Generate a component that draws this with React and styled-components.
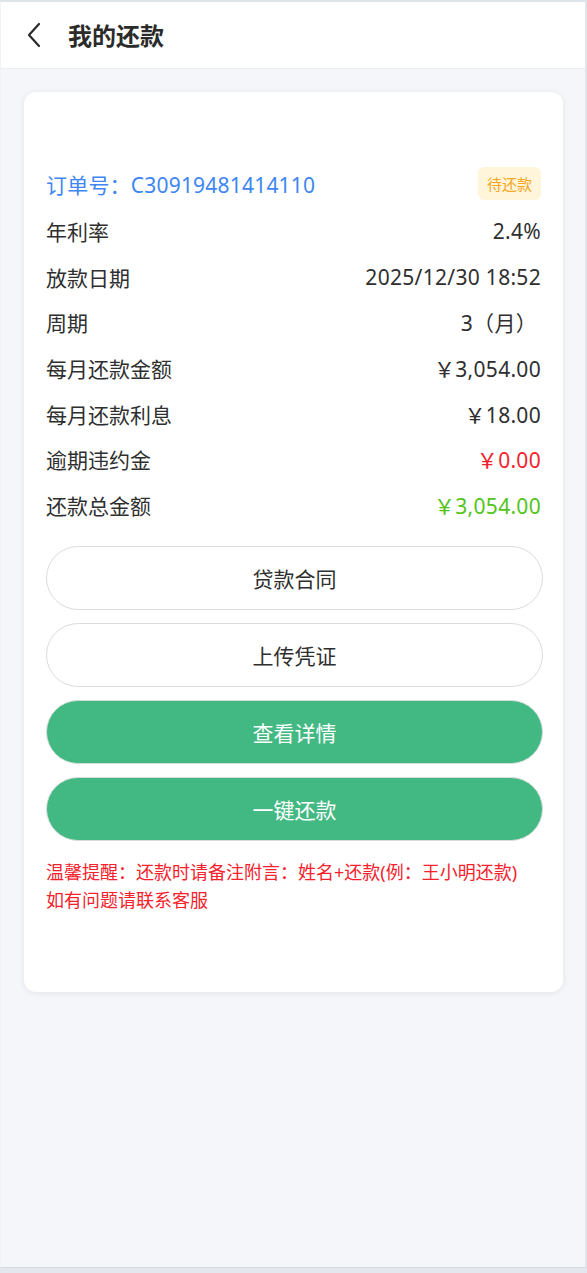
import React from "react";
import styled, { createGlobalStyle } from "styled-components";

const Global = createGlobalStyle`
  html, body { margin: 0; padding: 0; background: #e4e8ee; }
  body { font-family: "Noto Sans", "Noto Sans CJK SC", sans-serif; }
  * { box-sizing: border-box; }
`;

const Frame = styled.div`
  width: 587px;
  height: 1268px;
  background: #f5f6fa;
  border-top: 2px solid #dfe3ea;
  border-left: 1px solid #f0f2f5;
  border-right: 2px solid #e2e5ea;
  border-bottom: 1px solid #d6dbe3;
  display: flex;
  flex-direction: column;
`;

const Header = styled.header`
  height: 67px;
  background: #fff;
  border-bottom: 1px solid #eceef2;
  display: flex;
  align-items: center;
  padding-left: 24px;
  gap: 25px;
`;

const Back = styled.button`
  width: 18px;
  height: 30px;
  padding: 0;
  border: 0;
  background: none;
  display: flex;
  align-items: center;
  justify-content: center;
`;

const Title = styled.h1`
  margin: 0;
  font-family: "Noto Sans CJK SC", sans-serif;
  font-size: 24px;
  font-weight: 700;
  color: #2b2b2b;
  line-height: 30px;
`;

const Main = styled.main`
  padding: 23px 22px 0 23px;
`;

const Card = styled.section`
  background: #fff;
  border-radius: 12px;
  box-shadow: 0 1px 6px rgba(0, 0, 0, 0.08);
  padding: 75px 22px 78px 22px;
  display: flex;
  flex-direction: column;
`;

const OrderRow = styled.div`
  height: 33px;
  display: flex;
  align-items: center;
  justify-content: space-between;
  margin-bottom: 8px;
`;

const OrderNo = styled.span`
  font-size: 21px;
  color: #3e86f2;
  letter-spacing: 0.2px;
`;

const Badge = styled.span`
  height: 33px;
  padding: 0 9px;
  border-radius: 6px;
  background: #fff5da;
  color: #f6a623;
  font-size: 15px;
  display: flex;
  align-items: center;
`;

const Row = styled.div`
  height: 45.7px;
  display: flex;
  align-items: center;
  justify-content: space-between;
  font-size: 21px;
  color: #2f2f2f;
`;

const Value = styled.span`
  color: ${(p) => p.$color || "#2f2f2f"};
  padding-right: ${(p) => p.$pr || 0}px;
  letter-spacing: 0.3px;
`;

const Buttons = styled.div`
  margin-top: 18px;
  display: flex;
  flex-direction: column;
  gap: 13px;
`;

const Btn = styled.button`
  height: 64px;
  width: 497px;
  border-radius: 32px;
  border: 1px solid ${(p) => (p.$primary ? "#d9ddd9" : "#dcdcdc")};
  background: ${(p) => (p.$primary ? "#42b983" : "#fff")};
  color: ${(p) => (p.$primary ? "#fff" : "#2f2f2f")};
  font-family: inherit;
  font-size: 21px;
`;

const Notice = styled.p`
  margin: 17px 0 0;
  font-size: 18px;
  line-height: 28px;
  color: #f5222d;
`;

const rows = [
  ["年利率", "2.4%"],
  ["放款日期", "2025/12/30 18:52"],
  ["周期", "3（月）", null, 4],
  ["每月还款金额", "￥3,054.00"],
  ["每月还款利息", "￥18.00"],
  ["逾期违约金", "￥0.00", "#f5222d"],
  ["还款总金额", "￥3,054.00", "#52c41a"],
];

export default function App() {
  return (
    <>
      <Global />
      <Frame>
        <Header>
          <Back aria-label="返回">
            <svg width="16" height="26" viewBox="0 0 16 26" fill="none">
              <path d="M13 2 L3 13 L13 24" stroke="#2b2b2b" strokeWidth="2.2" strokeLinecap="round" strokeLinejoin="round" />
            </svg>
          </Back>
          <Title>我的还款</Title>
        </Header>
        <Main>
          <Card>
            <OrderRow>
              <OrderNo>订单号：C30919481414110</OrderNo>
              <Badge>待还款</Badge>
            </OrderRow>
            {rows.map(([k, v, c, pr]) => (
              <Row key={k}>
                <span>{k}</span>
                <Value $color={c} $pr={pr}>{v}</Value>
              </Row>
            ))}
            <Buttons>
              <Btn>贷款合同</Btn>
              <Btn>上传凭证</Btn>
              <Btn $primary>查看详情</Btn>
              <Btn $primary>一键还款</Btn>
            </Buttons>
            <Notice>
              温馨提醒：还款时请备注附言：姓名+还款(例：王小明还款)
              <br />
              如有问题请联系客服
            </Notice>
          </Card>
        </Main>
      </Frame>
    </>
  );
}
